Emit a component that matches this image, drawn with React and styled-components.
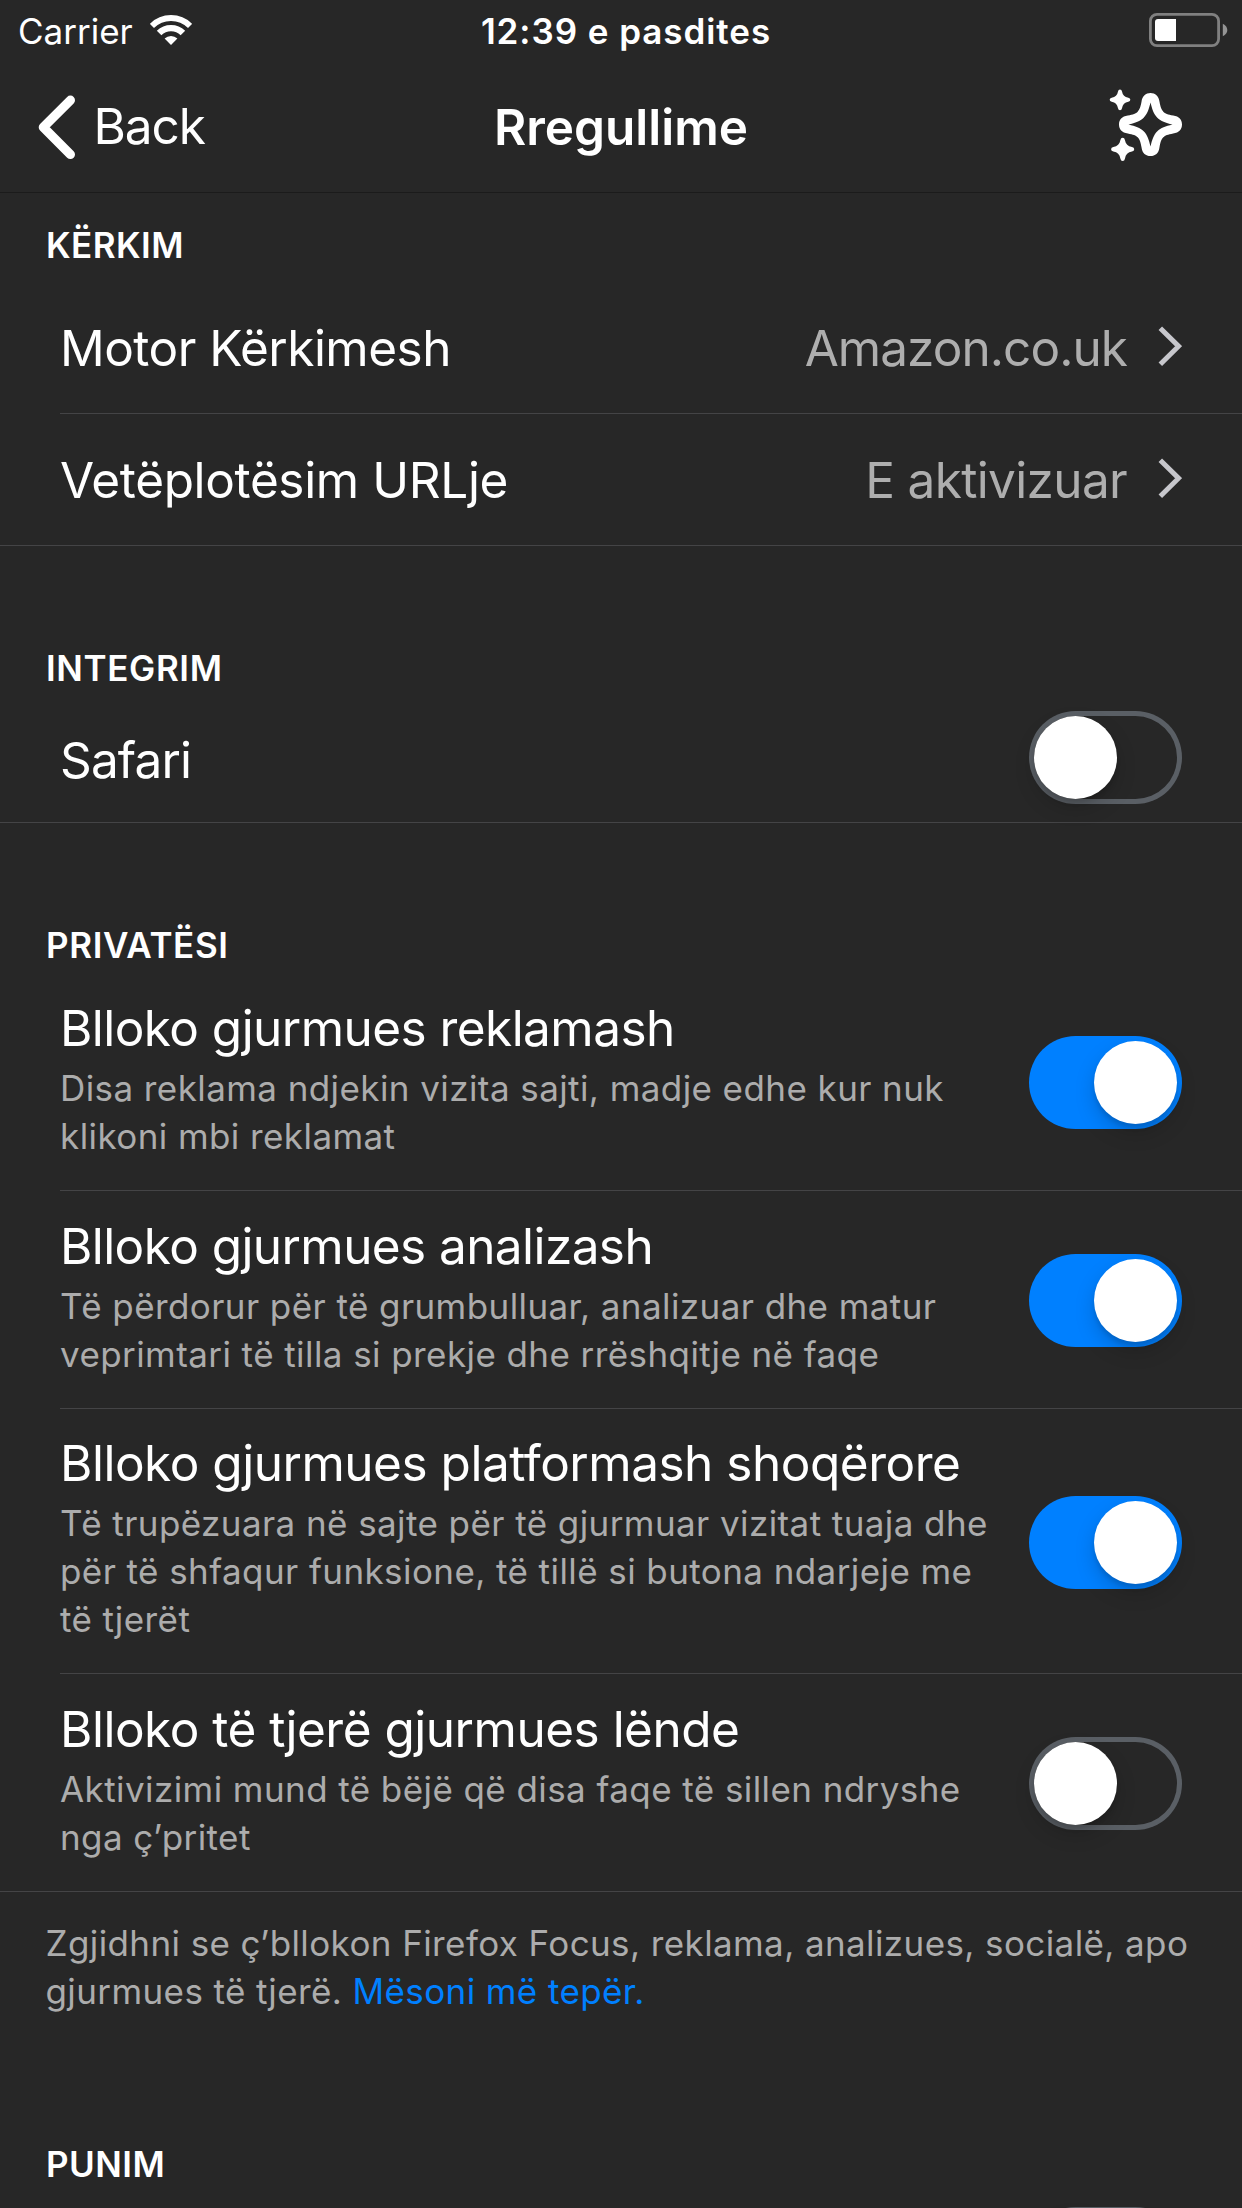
import React from 'react';
import styled, { createGlobalStyle } from 'styled-components';

const GlobalStyle = createGlobalStyle`
  body { margin: 0; background: #272727; }
  * { box-sizing: border-box; }
`;

const Screen = styled.main`
  width: 1242px;
  height: 2208px;
  overflow: hidden;
  display: flex;
  flex-direction: column;
  background: #272727;
  color: #fff;
  font-family: Inter, "Liberation Sans", sans-serif;
  font-size: 49.5px;
  white-space: nowrap;
  & > * { flex-shrink: 0; }
`;

const StatusBar = styled.div`
  display: grid;
  grid-template-columns: 1fr auto 1fr;
  align-items: start;
  height: 60px;
  padding: 0 14px 0 18px;
  font-size: 35px;
  line-height: 62px;
`;

const Carrier = styled.div`
  display: flex;
  gap: 17px;
  svg { margin-top: 15px; }
`;

const Clock = styled.div`
  font-weight: 600;
  letter-spacing: 0.94px;
  padding-left: 6px;
`;

const BatteryIcon = styled.svg`
  justify-self: end;
  margin-top: 12px;
`;

const NavBar = styled.header`
  display: grid;
  grid-template-columns: 1fr auto 1fr;
  align-items: center;
  height: 133px;
  padding: 1px 58px 0 38px;
  border-bottom: 1px solid #1b1b1b;
  line-height: 130px;
`;

const BackButton = styled.div`
  display: flex;
  align-items: center;
  gap: 17.5px;
  letter-spacing: -1.05px;
  span { padding-bottom: 2px; }
`;

const Title = styled.h1`
  margin: 0;
  padding-left: 20px;
  font-size: 49.5px;
  font-weight: 600;
  line-height: 132px;
`;

const TipsIcon = styled.svg`
  justify-self: end;
  margin-top: -4px;
`;

const SectionHeader = styled.h2`
  margin: 0;
  padding: ${(p) => p.$top ?? 100}px 46px ${(p) => p.$bottom ?? 1}px;
  font-size: 35px;
  font-weight: 600;
  line-height: 44px;
  letter-spacing: ${(p) => p.$track}px;
`;

const Row = styled.div`
  display: flex;
  align-items: center;
  min-height: ${(p) => (p.$tall ? 218 : 132)}px;
  margin-left: ${(p) => (p.$last ? 0 : 60)}px;
  padding-left: ${(p) => (p.$last ? 60 : 0)}px;
  padding-right: 60px;
  border-bottom: 1px solid #444446;
`;

const Label = styled.span`
  flex: 1;
  line-height: 60px;
  letter-spacing: ${(p) => p.$track}px;
  padding-top: ${(p) => p.$drop ?? 0}px;
`;

const Value = styled.span`
  color: #aeaeae;
  line-height: 60px;
  letter-spacing: ${(p) => p.$track}px;
  margin-right: 31px;
`;

const Copy = styled.div`
  flex: 1;
  display: flex;
  flex-direction: column;
  gap: 6px;
  padding: 24px 0 30px;
`;

const Detail = styled.span`
  color: #acacac;
  font-size: 35px;
  line-height: 48px;
  letter-spacing: 0.42px;
`;

const Footer = styled.p`
  margin: 0;
  padding: 27px 45.5px;
  color: #acacac;
  font-size: 35px;
  line-height: 48px;
  letter-spacing: 0.4px;
`;

const Link = styled.a`
  color: #0080ff;
`;

const Switch = styled.div`
  display: flex;
  flex-shrink: 0;
  justify-content: ${(p) => (p.$on ? 'flex-end' : 'flex-start')};
  width: 153px;
  height: 93px;
  margin-top: 2px;
  padding: 5px 5px 5px 4.5px;
  border-radius: 47px;
  background: ${(p) => (p.$on ? '#0080ff' : 'transparent')};
  box-shadow: ${(p) => (p.$on ? 'none' : 'inset 0 0 0 5px #5a5f65')};
`;

const Knob = styled.div`
  width: 83px;
  height: 83px;
  border-radius: 50%;
  background: #fff;
  box-shadow: 0 9px 20px rgba(0, 0, 0, 0.17), 0 4px 4px rgba(0, 0, 0, 0.1);
`;

const Toggle = ({ on }) => (
  <Switch $on={on} role="switch" aria-checked={!!on}>
    <Knob />
  </Switch>
);

const Chevron = styled.svg`
  margin-top: -3px;
`;

const Disclosure = () => (
  <Chevron width="24" height="40" viewBox="0 0 24 40" fill="none">
    <path d="M2.3 2.2 20.6 20.2 2.3 38.2" stroke="#c7c7cc" strokeWidth="5" />
  </Chevron>
);

const Wifi = () => (
  <svg width="42" height="30" viewBox="0 0 42 30">
    <g fill="none" stroke="#fff">
      <path d="M1.9 10.9A27 27 0 0 1 40.1 10.9" strokeWidth="5.9" />
      <path d="M9.1 18.1A16.8 16.8 0 0 1 32.9 18.1" strokeWidth="6.4" />
    </g>
    <path d="M21 30 14.6 23.6A9.2 9.2 0 0 1 27.4 23.6Z" fill="#fff" />
  </svg>
);

const trackers = [
  {
    title: 'Blloko gjurmues reklamash',
    track: -0.55,
    lines: ['Disa reklama ndjekin vizita sajti, madje edhe kur nuk', 'klikoni mbi reklamat'],
    on: true,
  },
  {
    title: 'Blloko gjurmues analizash',
    track: -0.58,
    lines: ['Të përdorur për të grumbulluar, analizuar dhe matur', 'veprimtari të tilla si prekje dhe rrëshqitje në faqe'],
    on: true,
  },
  {
    title: 'Blloko gjurmues platformash shoqërore',
    track: -0.48,
    lines: [
      'Të trupëzuara në sajte për të gjurmuar vizitat tuaja dhe',
      'për të shfaqur funksione, të tillë si butona ndarjeje me',
      'të tjerët',
    ],
    on: true,
  },
  {
    title: 'Blloko të tjerë gjurmues lënde',
    track: -0.49,
    lines: ['Aktivizimi mund të bëjë që disa faqe të sillen ndryshe', 'nga ç’pritet'],
    on: false,
  },
];

const lines = (items) =>
  items.map((line, i) => (
    <React.Fragment key={line}>
      {i > 0 && <br />}
      {line}
    </React.Fragment>
  ));

const STAR =
  'M-6-25Q-5-31 0-31T6-25C8-14 14-8 25-6Q31-5 31 0T25 6C14 8 8 14 6 25Q5 31 0 31T-6 25C-8 14-14 8-25 6Q-31 5-31 0T-25-6C-14-8-8-14-6-25Z';

export default function App() {
  return (
    <Screen>
      <GlobalStyle />
      <StatusBar>
        <Carrier>
          <span>Carrier</span>
          <Wifi />
        </Carrier>
        <Clock>12:39 e pasdites</Clock>
        <BatteryIcon width="80" height="36" viewBox="0 0 80 36">
          <rect x="2.4" y="2.4" width="68.2" height="31.2" rx="6.6" fill="none" stroke="#808080" strokeWidth="2.8" />
          <path d="M10 7H28V29H10Q7 29 7 26V10Q7 7 10 7Z" fill="#fff" />
          <path d="M74.8 11.7Q79.3 14 79.3 18T74.8 24.3Z" fill="#949494" />
        </BatteryIcon>
      </StatusBar>
      <NavBar>
        <BackButton>
          <svg width="38" height="66" viewBox="0 0 38 66" fill="none">
            <path
              d="M32.4 6.2 5.3 33.3 32.4 60.4"
              stroke="#fff"
              strokeWidth="9.2"
              strokeLinecap="round"
              strokeLinejoin="round"
            />
          </svg>
          <span>Back</span>
        </BackButton>
        <Title>Rregullime</Title>
        <TipsIcon width="76" height="76" viewBox="144 258 228 228" fill="#fff">
          <path
            transform="translate(271.5 370.5)"
            fillRule="evenodd"
            d="M-27-68C-25-86-14-94.5 0-94.5S25-86 27-68C30-52 33-44 38.5-38.5S52-30 68-27C86-25 94.5-14 94.5 0S86 25 68 27C52 30 44 33 38.5 38.5S30 52 27 68C25 86 14 94.5 0 94.5S-25 86-27 68C-30 52-33 44-38.5 38.5S-52 30-68 27C-86 25-94.5 14-94.5 0S-86-25-68-27C-52-30-44-33-38.5-38.5S-30-52-27-68ZM0-66C-5-45-10-31-20.500-20.500S-45-5-66 0C-45 5-31 10-20.500 20.500S-5 45 0 66C5 45 10 31 20.500 20.500S45 5 66 0C45-5 31-10 20.500-20.500S5-45 0-66Z"
          />
          <path transform="translate(180 296.500)" d={STAR} />
          <path transform="translate(188 445) scale(1.12)" d={STAR} />
        </TipsIcon>
      </NavBar>

      <SectionHeader $top={30} $bottom={15} $track={0.45}>KËRKIM</SectionHeader>
      <Row>
        <Label $track={-0.52}>Motor Kërkimesh</Label>
        <Value $track={-0.95}>Amazon.co.uk</Value>
        <Disclosure />
      </Row>
      <Row $last>
        <Label $track={-0.36}>Vetëplotësim URLje</Label>
        <Value $track={-0.66}>E aktivizuar</Value>
        <Disclosure />
      </Row>

      <SectionHeader $track={0.62}>INTEGRIM</SectionHeader>
      <Row $last>
        <Label $track={-0.85} $drop={6}>Safari</Label>
        <Toggle />
      </Row>

      <SectionHeader $bottom={6} $track={0.61}>PRIVATËSI</SectionHeader>
      {trackers.map((t, i) => (
        <Row key={t.title} $tall $last={i === trackers.length - 1}>
          <Copy>
            <Label $track={t.track}>{t.title}</Label>
            <Detail>{lines(t.lines)}</Detail>
          </Copy>
          <Toggle on={t.on} />
        </Row>
      ))}
      <Footer>
        Zgjidhni se ç’bllokon Firefox Focus, reklama, analizues, socialë, apo
        <br />
        gjurmues të tjerë. <Link>Mësoni më tepër.</Link>
      </Footer>

      <SectionHeader $track={0.48}>PUNIM</SectionHeader>
      <Row $last>
        <Label />
        <Toggle />
      </Row>
    </Screen>
  );
}
